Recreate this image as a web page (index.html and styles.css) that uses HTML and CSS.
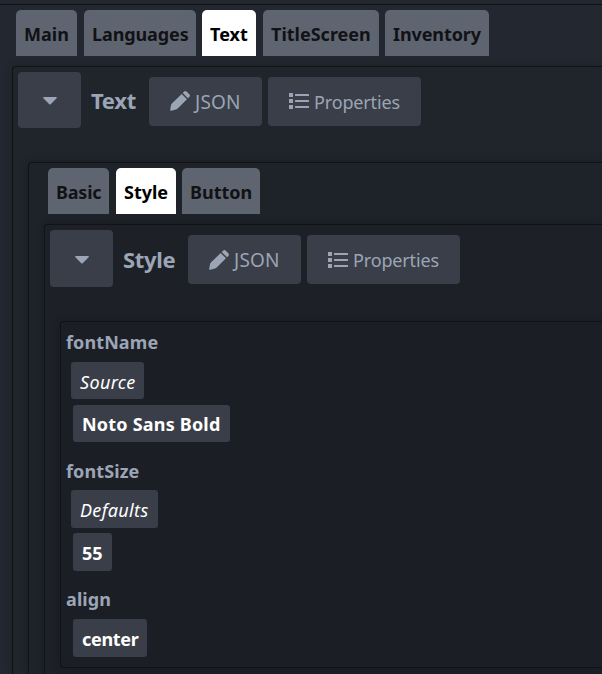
FILE: index.html
```html
<!DOCTYPE html>
<html lang="en">
<head>
<meta charset="utf-8">
<title>Editor</title>
<link rel="stylesheet" href="styles.css">
</head>
<body>
<svg class="defs" aria-hidden="true">
  <symbol id="caret" viewBox="0 0 14 8"><path d="M1 0h12c.9 0 1.200.7.6 1.300L7.700 7.200c-.4.400-1 .400-1.400 0L.4 1.300C-.2.700.1 0 1 0z"/></symbol>
  <symbol id="pen" viewBox="0 0 20 20"><path d="M11.700 3l5.300 5.300-9.300 9.300q-.7.700-1.700 1L1.200 19.800q-1.200.2-1-1l.8-4.600q.2-1 .9-1.700zM12.700 2l1.300-1.300a2 2 0 0 1 2.800 0l2.500 2.500a2 2 0 0 1 0 2.800l-1.300 1.300z"/></symbol>
  <symbol id="list" viewBox="0 0 20 16"><path d="M0 0h4v4H0zM0 6h4v4H0zM0 12h4v4H0zM6.500 1h13a.5.5 0 0 1 .5.500v1a.5.5 0 0 1-.5.500h-13a.5.5 0 0 1-.5-.5v-1a.5.5 0 0 1 .5-.5zM6.500 7h13a.5.5 0 0 1 .5.500v1a.5.5 0 0 1-.5.500h-13a.5.5 0 0 1-.5-.5v-1a.5.5 0 0 1 .5-.5zM6.500 13h13a.5.5 0 0 1 .5.500v1a.5.5 0 0 1-.5.500h-13a.5.5 0 0 1-.5-.5v-1a.5.5 0 0 1 .5-.5z"/></symbol>
</svg>
<main class="page">
  <nav class="tabs">
    <a class="tab main">Main</a><a class="tab languages">Languages</a><a class="tab text active">Text</a><a class="tab title">TitleScreen</a><a class="tab inventory">Inventory</a>
  </nav>
  <section class="panel outer">
    <header class="bar">
      <button class="btn toggle"><svg class="caret"><use href="#caret"/></svg></button>
      <h2 class="heading">Text</h2>
      <button class="btn json"><svg class="pen"><use href="#pen"/></svg><span>JSON</span></button>
      <button class="btn props"><svg class="list"><use href="#list"/></svg><span>Properties</span></button>
    </header>
    <section class="panel group">
      <nav class="tabs inner">
        <a class="tab basic">Basic</a><a class="tab style active">Style</a><a class="tab button">Button</a>
      </nav>
      <section class="panel detail">
        <header class="bar tall">
          <button class="btn toggle"><svg class="caret"><use href="#caret"/></svg></button>
          <h2 class="heading wide">Style</h2>
          <button class="btn json"><svg class="pen"><use href="#pen"/></svg><span>JSON</span></button>
          <button class="btn props"><svg class="list"><use href="#list"/></svg><span>Properties</span></button>
        </header>
        <section class="panel fields">
          <h3 class="label name">fontName</h3>
          <div class="chip source">Source</div>
          <div class="chip value font">Noto Sans Bold</div>
          <h3 class="label size">fontSize</h3>
          <div class="chip source defaults">Defaults</div>
          <div class="chip value number">55</div>
          <h3 class="label align">align</h3>
          <div class="chip value center">center</div>
        </section>
      </section>
    </section>
  </section>
</main>
</body>
</html>
```
FILE: styles.css
```css
* { box-sizing: border-box; }
html, body { margin: 0; height: 674px; overflow: hidden; }
body { padding-top: 4px; background: #23272f; color: #9ca5b5; font-family: "Noto Sans", "Open Sans", sans-serif; }
.defs { display: none; }
.page { width: 100%; height: 670px; overflow: hidden; border-top: 1px solid #101216; }
.tabs { display: flex; padding: 5px 0 0 16px; }
.tab { height: 46px; padding-left: 8px; border-radius: 5px 5px 0 0; background: #5f6570; color: #111216; font-size: 18px; font-weight: 700; line-height: 48px; white-space: nowrap; }
.active { background: #fff; color: #000; }
.main { width: 61px; margin-right: 7px; }
.languages { width: 112px; margin-right: 6px; letter-spacing: -.1px; }
.text { width: 54px; margin-right: 7px; }
.title { width: 116px; margin-right: 6px; }
.inventory { width: 104px; letter-spacing: -.1px; }
.panel { border: 1px solid #101216; border-right: 0; border-radius: 4px 0 0 4px; box-shadow: 0 0 9px rgba(0,0,0,.22); }
.outer { margin: 10px 0 0 12px; height: 608px; border-bottom: 0; border-radius: 4px 0 0 0; background: #20242b; }
.bar { display: flex; align-items: center; height: 56px; margin: 5px 0 0 5px; }
.bar.tall { height: 57px; }
.btn { display: flex; align-items: center; flex: none; height: 49px; margin: 0; padding: 0 0 0 21px; border: 0; border-radius: 4px; background: #3a3e48; color: #9ca5b5; font-family: inherit; font-size: 18px; }
.btn svg { flex: none; fill: #9ca5b5; }
.toggle { width: 63px; height: 100%; padding: 0; justify-content: center; }
.caret { width: 14px; height: 8px; margin-top: 2px; }
.pen { width: 20px; height: 20px; margin-right: 5px; }
.list { width: 20px; height: 16px; margin-right: 5px; }
.json { width: 113px; margin: 2px 6px 0 0; font-size: 19px; }
.json span { letter-spacing: .2px; }
.props { width: 153px; margin-top: 2px; letter-spacing: -.15px; }
.btn span { padding-top: 1px; }
.heading { width: 58px; margin: 0 0 0 10px; font-size: 22px; line-height: 30px; letter-spacing: -.3px; }
.heading.wide { width: 65px; }
.group { margin: 34px 0 0 15px; height: 512px; border-bottom: 0; border-radius: 4px 0 0 0; background: #1e2329; }
.inner { padding: 5px 0 0 19px; }
.basic { width: 61px; margin-right: 7px; letter-spacing: -.2px; }
.style { width: 60px; margin-right: 6px; }
.button { width: 78px; }
.detail { margin: 10px 0 0 15px; height: 450px; border-bottom: 0; border-radius: 4px 0 0 0; background: #1d2127; }
.fields { margin: 34px 0 0 15px; height: 347px; padding-left: 5px; background: #1b1e25; }
.label { height: 24px; margin: 0; font-size: 18px; line-height: 24px; letter-spacing: .1px; }
.label.name { margin-top: 8px; }
.label.size { margin-top: 17px; }
.label.align { margin-top: 16px; }
.chip { height: 37px; border-radius: 3px; background: #3a3e48; color: #fff; font-size: 18px; line-height: 40px; padding-left: 9px; white-space: nowrap; }
.source { width: 73px; margin: 8px 0 0 5px; font-style: italic; letter-spacing: .35px; }
.value { margin: 6px 0 0 7px; font-weight: 700; line-height: 39px; }
.font { width: 157px; letter-spacing: .2px; }
.defaults { width: 87px; height: 38px; margin-top: 7px; }
.number { width: 39px; height: 38px; margin-top: 5px; line-height: 41px; }
.center { width: 74px; height: 38px; margin-top: 8px; line-height: 41px; letter-spacing: -.3px; }
```
